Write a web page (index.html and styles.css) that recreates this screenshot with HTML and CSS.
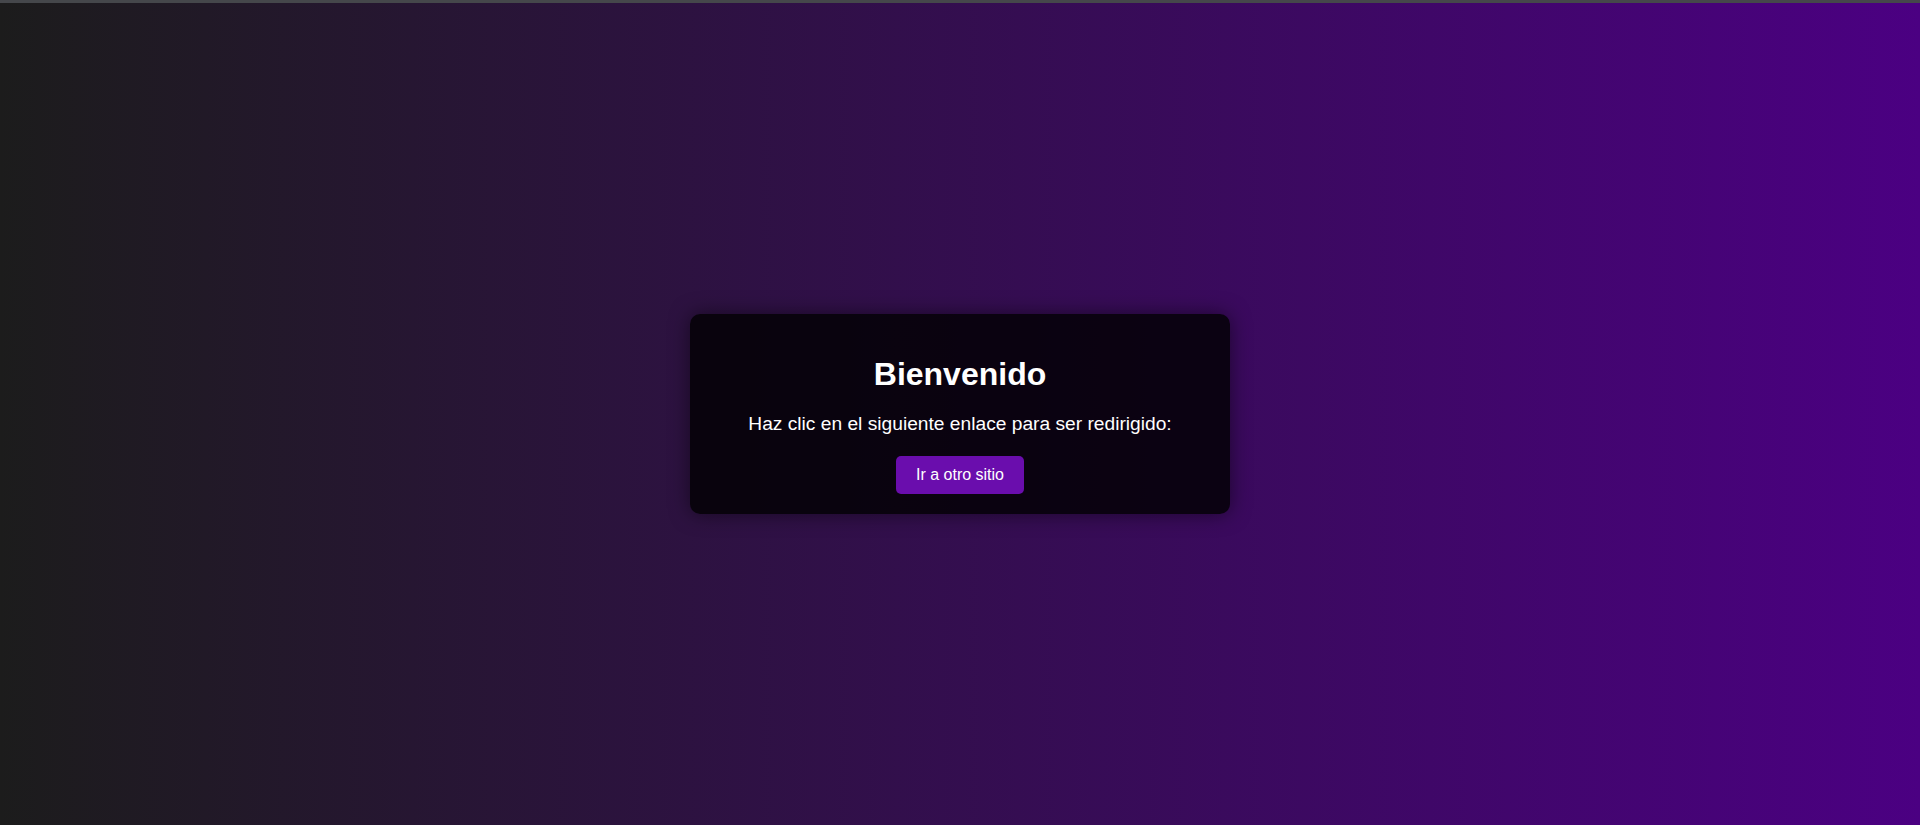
FILE: index.html
```html
<!DOCTYPE html>
<html lang="es">
<head>
<meta charset="utf-8">
<title>Bienvenido</title>
<link rel="stylesheet" href="styles.css">
</head>
<body>
<div class="topline"></div>
<main class="stage">
  <div class="card">
    <h1 class="title">Bienvenido</h1>
    <p class="lead">Haz clic en el siguiente enlace para ser redirigido:</p>
    <a class="btn" href="#">Ir a otro sitio</a>
  </div>
</main>
</body>
</html>
```
FILE: styles.css
```css
html, body {
  margin: 0;
  padding: 0;
  height: 100%;
}
body {
  font-family: "Liberation Sans", Arial, sans-serif;
  background: linear-gradient(to right, #1c1c1c, #4b0082);
  color: #ffffff;
  display: flex;
  flex-direction: column;
  overflow: hidden;
}
.topline {
  height: 3px;
  background: #45474b;
  flex: none;
}
.stage {
  flex: 1;
  display: flex;
  align-items: center;
  justify-content: center;
}
.card {
  width: 500px;
  padding: 20px;
  background: rgba(0, 0, 0, 0.8);
  border-radius: 10px;
  box-shadow: 0 0 20px rgba(0, 0, 0, 0.5);
  text-align: center;
}
.title {
  font-size: 32px;
  font-weight: bold;
  margin: 22px 0 20px;
}
.lead {
  font-size: 19.2px;
  margin: 0 0 21px;
}
.btn {
  display: inline-block;
  padding: 10px 20px;
  background: #6a0dad;
  color: #ffffff;
  text-decoration: none;
  border-radius: 5px;
  font-size: 16px;
}
```
